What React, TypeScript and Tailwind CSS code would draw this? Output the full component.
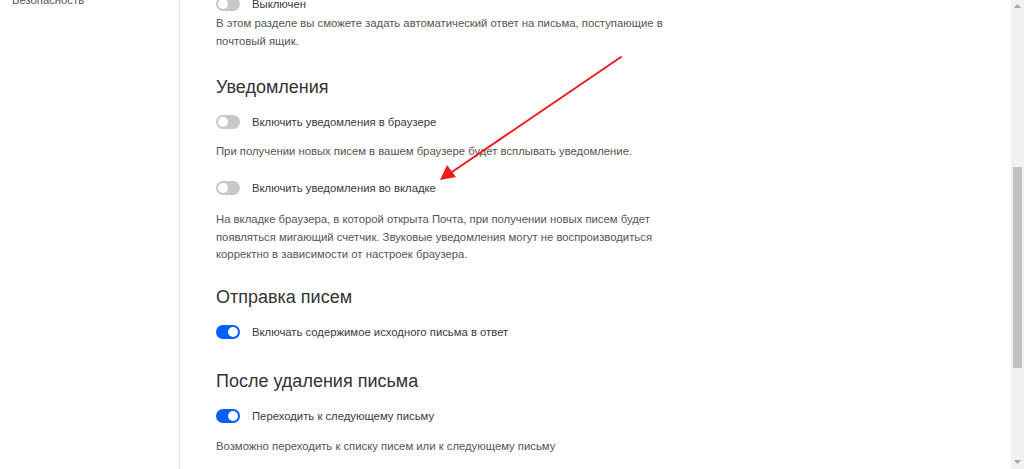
import React from "react";

function Toggle({ on }: { on: boolean }) {
  return (
    <div
      className={
        "relative w-[24px] h-[14px] rounded-full shrink-0 " +
        (on ? "bg-[#005ff9]" : "bg-[#c8c8cc]")
      }
    >
      <div
        className={
          "absolute top-[2px] w-[10px] h-[10px] rounded-full bg-white " +
          (on ? "left-[12px]" : "left-[2px]")
        }
      />
    </div>
  );
}

function Row({ on, label, className }: { on: boolean; label: string; className?: string }) {
  return (
    <div className={"flex items-center h-[20px] gap-[12px] " + (className || "")}>
      <Toggle on={on} />
      <span className="text-[11.3px] leading-[20px] text-[#3a3a3a]">{label}</span>
    </div>
  );
}

export default function App() {
  const font = { fontFamily: '"Liberation Sans", Arial, sans-serif' };
  return (
    <div className="relative w-[1024px] h-[469px] overflow-hidden bg-white flex" style={font}>
      <aside className="w-[180px] shrink-0 border-r border-[#e6e6e6] pl-[12px]">
        <div className="-mt-[9px] text-[11.3px] leading-[18px] text-[#555]">Безопасность</div>
      </aside>
      <main className="flex-1 pl-[36px]">
        <div className="flex flex-col w-[470px]">
          <Row on={false} label="Выключен" className="-mt-[6px]" />
          <p className="text-[11.3px] leading-[18px] text-[#555]">
            В этом разделе вы сможете задать автоматический ответ на письма, поступающие в
            <br />
            почтовый ящик.
          </p>
          <h2 className="mt-[23px] text-[18px] leading-[28px] text-[#333]">Уведомления</h2>
          <Row on={false} label="Включить уведомления в браузере" className="mt-[11px]" />
          <p className="mt-[10px] text-[11.3px] leading-[18px] text-[#555]">
            При получении новых писем в вашем браузере будет всплывать уведомление.
          </p>
          <Row on={false} label="Включить уведомления во вкладке" className="mt-[18px]" />
          <p className="mt-[13px] text-[11.3px] leading-[17.5px] text-[#555]">
            На вкладке браузера, в которой открыта Почта, при получении новых писем будет
            <br />
            появляться мигающий счетчик. Звуковые уведомления могут не воспроизводиться
            <br />
            корректно в зависимости от настроек браузера.
          </p>
          <h2 className="mt-[19px] text-[18px] leading-[28px] text-[#333]">Отправка писем</h2>
          <Row on={true} label="Включать содержимое исходного письма в ответ" className="mt-[11px]" />
          <h2 className="mt-[25px] text-[18px] leading-[28px] text-[#333]">После удаления письма</h2>
          <Row on={true} label="Переходить к следующему письму" className="mt-[11px]" />
          <p className="mt-[11px] text-[11.3px] leading-[18px] text-[#555]">
            Возможно переходить к списку писем или к следующему письму
          </p>
        </div>
      </main>
      <div className="w-[13px] shrink-0 bg-[#f1f1f1] flex flex-col items-center">
        <div className="h-[167px] w-full flex justify-center pt-[4px]">
          <svg width="7" height="5" viewBox="0 0 7 5">
            <path d="M3.5 0 L7 4 L0 4 Z" fill="#a3a3a3" />
          </svg>
        </div>
        <div className="w-[9px] h-[201px] bg-[#c1c1c1]" />
        <div className="flex-1 w-full flex justify-center items-end pb-[4px]">
          <svg width="7" height="5" viewBox="0 0 7 5">
            <path d="M0 0 L7 0 L3.5 4 Z" fill="#a3a3a3" />
          </svg>
        </div>
      </div>
      <svg
        className="absolute inset-0 pointer-events-none"
        width="1024"
        height="469"
        viewBox="0 0 1024 469"
      >
        <line x1="621" y1="57" x2="452" y2="172" stroke="#f01c1c" strokeWidth="2" strokeLinecap="round" />
        <path d="M440 180 L447 165 L456 177 Z" fill="#f01c1c" />
      </svg>
    </div>
  );
}
